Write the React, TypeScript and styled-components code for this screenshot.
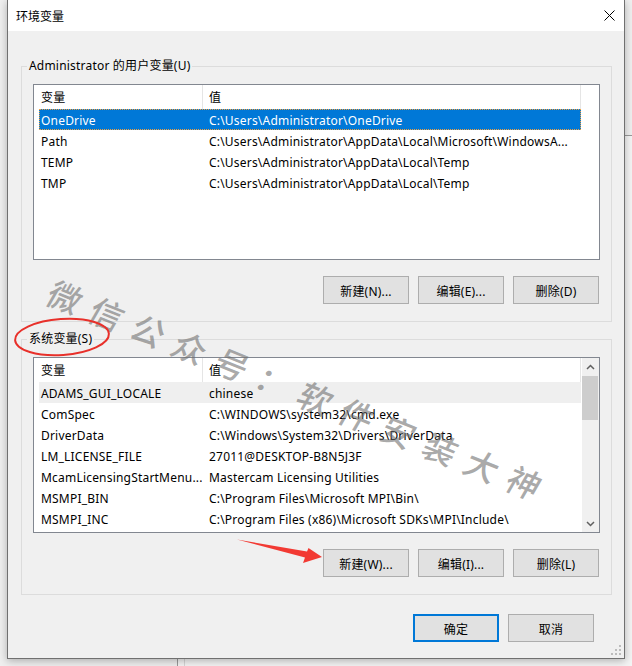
import React from "react";
import styled, { createGlobalStyle, css } from "styled-components";

const GlobalStyle = createGlobalStyle`
  html, body { margin: 0; padding: 0; }
  body {
    background: #ededed;
    font-family: "Noto Sans", "Noto Sans CJK SC", sans-serif;
    font-size: 12px;
    letter-spacing: 0.2px;
    color: #000;
  }
  * { box-sizing: border-box; }
`;

const Desktop = styled.div`
  position: relative;
  width: 632px;
  height: 666px;
  overflow: hidden;
  background: #efefef;
  padding-left: 7px;
`;

const BehindWindow = styled.div`
  position: absolute;
  left: 177px;
  top: 135px;
  width: 600px;
  height: 700px;
  border-left: 1px solid #9a9a9a;
  border-top: 1px solid #9a9a9a;
  background: #f4f4f4;
  &::after {
    content: "";
    position: absolute;
    left: 6px;
    top: 0;
    bottom: 0;
    border-left: 1px solid #d6d6d6;
  }
`;

const Window = styled.div`
  position: relative;
  width: 618px;
  height: 659px;
  border: 1px solid #707070;
  border-top: none;
  background: #f0f0f0;
  display: flex;
  flex-direction: column;
  box-shadow: 0 2px 8px rgba(0, 0, 0, 0.28);
`;

const TitleBar = styled.div`
  height: 31px;
  flex: none;
  background: #ffffff;
  display: flex;
  align-items: center;
  justify-content: space-between;
  padding-left: 8px;
`;

const Title = styled.span`
  font-family: "Noto Sans CJK SC", sans-serif;
  font-size: 12px;
  line-height: 16px;
  letter-spacing: 0;
`;

const CloseButton = styled.div`
  width: 29px;
  height: 31px;
  display: flex;
  align-items: center;
  justify-content: center;
`;

const Client = styled.div`
  flex: 1;
  display: flex;
  flex-direction: column;
  padding: 35px 12px 0 13px;
`;

const Group = styled.div<{ $gapTop?: number }>`
  position: relative;
  border: 1px solid #dcdcdc;
  padding: 17px 11px 17px 11px;
  display: flex;
  flex-direction: column;
  gap: 16px;
  margin-top: ${(p) => p.$gapTop ?? 0}px;
`;

const Caption = styled.span`
  position: absolute;
  top: -9px;
  left: 5px;
  padding: 0 2px;
  background: #f0f0f0;
  line-height: 16px;
  white-space: nowrap;
`;

const List = styled.div`
  height: 176px;
  border: 1px solid #828790;
  background: #ffffff;
  display: flex;
`;

const ListMain = styled.div`
  width: 547px;
  display: flex;
  flex-direction: column;
`;

const Side = styled.div`
  flex: 1;
  display: flex;
  justify-content: flex-end;
`;

const Header = styled.div`
  height: 24px;
  display: flex;
  flex: none;
`;

const HeaderCell = styled.div<{ $w: number; $pad: number }>`
  width: ${(p) => p.$w}px;
  padding-left: ${(p) => p.$pad}px;
  padding-top: 1px;
  border-right: 1px solid #e5e5e5;
  line-height: 24px;
  white-space: nowrap;
`;

const Rows = styled.div`
  padding-left: 5px;
  display: flex;
  flex-direction: column;
`;

const Row = styled.div<{ $state?: "focus" | "inactive" }>`
  height: 21px;
  display: flex;
  align-items: center;
  padding-top: 2px;
  white-space: nowrap;
  ${(p) =>
    p.$state === "focus" &&
    css`
      background: #0078d7;
      color: #ffffff;
      outline: 1px dotted #f0a040;
      outline-offset: -1px;
    `}
  ${(p) =>
    p.$state === "inactive" &&
    css`
      background: #efefef;
    `}
`;

const NameCell = styled.div`
  width: 163px;
  padding-left: 2px;
  overflow: hidden;
`;

const ValueCell = styled.div`
  flex: 1;
  padding-left: 7px;
  overflow: hidden;
`;

const ScrollBar = styled.div`
  width: 17px;
  background: #f0f0f0;
  display: flex;
  flex-direction: column;
`;

const ScrollArrow = styled.div`
  height: 17px;
  display: flex;
  align-items: center;
  justify-content: center;
`;

const Track = styled.div`
  flex: 1;
  display: flex;
  flex-direction: column;
  padding: 1px 1px 0 0;
`;

const Thumb = styled.div`
  height: 44px;
  background: #cdcdcd;
`;

const ButtonRow = styled.div<{ $right?: number; $top?: number }>`
  display: flex;
  justify-content: flex-end;
  gap: 9px;
  padding-right: ${(p) => p.$right ?? 1}px;
  margin-top: ${(p) => p.$top ?? 0}px;
`;

const Button = styled.div<{ $primary?: boolean }>`
  width: 86px;
  height: 28px;
  background: #e1e1e1;
  border: ${(p) => (p.$primary ? "2px solid #0078d7" : "1px solid #adadad")};
  display: flex;
  align-items: center;
  justify-content: center;
  padding-top: 1px;
  white-space: nowrap;
`;

const Grip = styled.svg`
  position: absolute;
  right: 2px;
  bottom: 2px;
`;

const Watermark = styled.div`
  position: absolute;
  left: 50px;
  top: 274px;
  font-family: "Noto Sans CJK SC", sans-serif;
  font-size: 33px;
  line-height: 33px;
  letter-spacing: 12px;
  font-weight: 500;
  color: rgba(112, 112, 112, 0.6);
  white-space: nowrap;
  transform: rotate(22deg) skewX(-8deg);
  transform-origin: 0 50%;
  pointer-events: none;
`;

const Markup = styled.svg`
  position: absolute;
  left: 0;
  top: 0;
  pointer-events: none;
`;

type Item = [string, string];

const userVars: Item[] = [
  ["OneDrive", "C:\\Users\\Administrator\\OneDrive"],
  ["Path", "C:\\Users\\Administrator\\AppData\\Local\\Microsoft\\WindowsA..."],
  ["TEMP", "C:\\Users\\Administrator\\AppData\\Local\\Temp"],
  ["TMP", "C:\\Users\\Administrator\\AppData\\Local\\Temp"],
];

const sysVars: Item[] = [
  ["ADAMS_GUI_LOCALE", "chinese"],
  ["ComSpec", "C:\\WINDOWS\\system32\\cmd.exe"],
  ["DriverData", "C:\\Windows\\System32\\Drivers\\DriverData"],
  ["LM_LICENSE_FILE", "27011@DESKTOP-B8N5J3F"],
  ["McamLicensingStartMenu...", "Mastercam Licensing Utilities"],
  ["MSMPI_BIN", "C:\\Program Files\\Microsoft MPI\\Bin\\"],
  ["MSMPI_INC", "C:\\Program Files (x86)\\Microsoft SDKs\\MPI\\Include\\"],
];

const Chevron = ({ up }: { up?: boolean }) => (
  <svg width="9" height="6" viewBox="0 0 9 6">
    <polyline
      points={up ? "1,5 4.5,1.5 8,5" : "1,1 4.5,4.5 8,1"}
      fill="none"
      stroke="#606060"
      strokeWidth="1.5"
    />
  </svg>
);

const VarList = ({
  items,
  state,
  scroll,
}: {
  items: Item[];
  state: "focus" | "inactive";
  scroll?: boolean;
}) => (
  <List>
    <ListMain>
      <Header>
        <HeaderCell $w={169} $pad={7}>变量</HeaderCell>
        <HeaderCell $w={378} $pad={6}>值</HeaderCell>
      </Header>
      <Rows>
        {items.map(([n, v], i) => (
          <Row key={n} $state={i === 0 ? state : undefined}>
            <NameCell>{n}</NameCell>
            <ValueCell>{v}</ValueCell>
          </Row>
        ))}
      </Rows>
    </ListMain>
    <Side>
      {scroll && (
        <ScrollBar>
          <ScrollArrow>
            <Chevron up />
          </ScrollArrow>
          <Track>
            <Thumb />
          </Track>
          <ScrollArrow>
            <Chevron />
          </ScrollArrow>
        </ScrollBar>
      )}
    </Side>
  </List>
);

export default function App() {
  return (
    <>
      <GlobalStyle />
      <Desktop>
        <BehindWindow />
        <Window>
          <TitleBar>
            <Title>环境变量</Title>
            <CloseButton>
              <svg width="11" height="11" viewBox="0 0 11 11">
                <path d="M0.5 0.5 L10.5 10.5 M10.5 0.5 L0.5 10.5" stroke="#000" strokeWidth="1" />
              </svg>
            </CloseButton>
          </TitleBar>
          <Client>
            <Group>
              <Caption>Administrator 的用户变量(U)</Caption>
              <VarList items={userVars} state="focus" />
              <ButtonRow>
                <Button>新建(N)...</Button>
                <Button>编辑(E)...</Button>
                <Button>删除(D)</Button>
              </ButtonRow>
            </Group>
            <Group $gapTop={17}>
              <Caption>系统变量(S)</Caption>
              <VarList items={sysVars} state="inactive" scroll />
              <ButtonRow>
                <Button>新建(W)...</Button>
                <Button>编辑(I)...</Button>
                <Button>删除(L)</Button>
              </ButtonRow>
            </Group>
            <ButtonRow $right={18} $top={19}>
              <Button $primary>确定</Button>
              <Button>取消</Button>
            </ButtonRow>
          </Client>
          <Grip width="11" height="11" viewBox="0 0 11 11">
            <g fill="#bcbcbc">
              <rect x="8" y="0" width="2" height="2" />
              <rect x="4" y="4" width="2" height="2" />
              <rect x="8" y="4" width="2" height="2" />
              <rect x="0" y="8" width="2" height="2" />
              <rect x="4" y="8" width="2" height="2" />
              <rect x="8" y="8" width="2" height="2" />
            </g>
          </Grip>
        </Window>
        <Watermark>微信公众号：软件安装大神</Watermark>
        <Markup width="632" height="666" viewBox="0 0 632 666">
          <ellipse
            cx="62"
            cy="337"
            rx="47"
            ry="18"
            fill="none"
            stroke="#e8302a"
            strokeWidth="2"
            transform="rotate(-4 62 337)"
          />
          <polygon
            points="237,539.5 307,551.5 308.5,548 322,557 303,563 305,557.5"
            fill="#f23a33"
          />
        </Markup>
      </Desktop>
    </>
  );
}
